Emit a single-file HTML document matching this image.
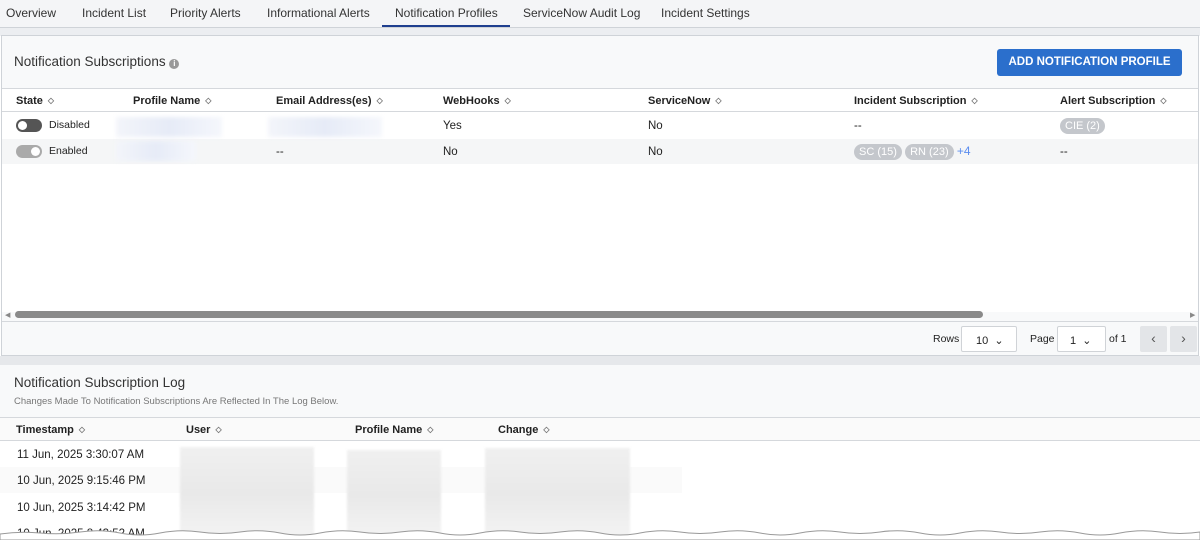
<!DOCTYPE html><html><head><style>
*{box-sizing:border-box;margin:0;padding:0}
body{width:1200px;height:540px;overflow:hidden;background:#fff;font-family:"Liberation Sans",sans-serif;color:#222;font-size:11.5px;position:relative}
.abs{position:absolute}
.tabs{left:0;top:0;width:1200px;height:28px;background:#f4f5f7;border-bottom:1px solid #cfd3d8}
.tab{position:absolute;top:6px;font-size:12px;color:#333}
.sort{display:inline-block;font-size:8px;color:#777;margin-left:5px;vertical-align:1px}
.h{font-weight:bold;font-size:11px}
.pill{display:inline-block;background:#c4c7cc;color:#fff;border-radius:9px;padding:2px 5px;font-size:11px}
.blur{background:linear-gradient(90deg,#f3f5fa,#e6ebf7,#f5f7fc);filter:blur(2px)}
.gblur{background:linear-gradient(180deg,#f0f0f0,#e9e9e9,#f4f4f4);filter:blur(1px)}
</style></head><body>
<div class="abs tabs">
<span class="tab" style="left:6px">Overview</span>
<span class="tab" style="left:82px">Incident List</span>
<span class="tab" style="left:170px">Priority Alerts</span>
<span class="tab" style="left:267px">Informational Alerts</span>
<span class="tab" style="left:395px">Notification Profiles</span>
<span class="tab" style="left:523px">ServiceNow Audit Log</span>
<span class="tab" style="left:661px">Incident Settings</span>
<div class="abs" style="left:382px;top:25px;width:128px;height:2px;background:#1f3f8f"></div>
</div>
<div class="abs" style="left:0;top:28px;width:1200px;height:8px;background:#eceef1"></div>
<div class="abs" style="left:1px;top:35px;width:1198px;height:321px;border:1px solid #cfd3d8;background:#f8f9fa"></div>
<div class="abs" style="left:14px;top:54px;font-size:13.5px;color:#333">Notification Subscriptions <span style="display:inline-block;width:10px;height:10px;border-radius:50%;background:#999;color:#fff;font-size:8px;text-align:center;line-height:10px;font-weight:bold">i</span></div>
<div class="abs" style="left:997px;top:49px;width:185px;height:27px;background:#2b6fcc;border-radius:3px;color:#fff;font-weight:bold;font-size:11.5px;text-align:center;line-height:27px">ADD NOTIFICATION PROFILE</div>
<div class="abs" style="left:2px;top:88px;width:1196px;height:24px;background:#fff;border-top:1px solid #d5d8dc;border-bottom:1px solid #d5d8dc"></div>
<div class="abs h" style="left:16px;top:95px">State<span class="sort">◇</span></div>
<div class="abs h" style="left:133px;top:95px">Profile Name<span class="sort">◇</span></div>
<div class="abs h" style="left:276px;top:95px">Email Address(es)<span class="sort">◇</span></div>
<div class="abs h" style="left:443px;top:95px">WebHooks<span class="sort">◇</span></div>
<div class="abs h" style="left:648px;top:95px">ServiceNow<span class="sort">◇</span></div>
<div class="abs h" style="left:854px;top:95px">Incident Subscription<span class="sort">◇</span></div>
<div class="abs h" style="left:1060px;top:95px">Alert Subscription<span class="sort">◇</span></div>
<div class="abs" style="left:2px;top:112px;width:1196px;height:200px;background:#fff"></div>
<div class="abs" style="left:2px;top:139px;width:1196px;height:25px;background:#f5f6f7"></div>
<div class="abs" style="left:16px;top:119px;width:26px;height:13px;border-radius:7px;background:#555"><div class="abs" style="left:2px;top:2px;width:9px;height:9px;border-radius:50%;background:#fff"></div></div>
<div class="abs" style="left:49px;top:119px;font-size:10.5px">Disabled</div>
<div class="abs" style="left:16px;top:145px;width:26px;height:13px;border-radius:7px;background:#aaa"><div class="abs" style="left:15px;top:2px;width:9px;height:9px;border-radius:50%;background:#fff"></div></div>
<div class="abs" style="left:49px;top:145px;font-size:10.5px">Enabled</div>
<div class="abs blur" style="left:116px;top:117px;width:106px;height:20px"></div>
<div class="abs blur" style="left:116px;top:141px;width:80px;height:20px"></div>
<div class="abs blur" style="left:268px;top:117px;width:114px;height:20px"></div>
<div class="abs" style="left:443px;top:120px">Yes</div>
<div class="abs" style="left:443px;top:146px">No</div>
<div class="abs" style="left:648px;top:120px">No</div>
<div class="abs" style="left:648px;top:146px">No</div>
<div class="abs" style="left:276px;top:146px">--</div>
<div class="abs" style="left:854px;top:120px">--</div>
<div class="abs" style="left:854px;top:144px"><span class="pill">SC (15)</span> <span class="pill">RN (23)</span> <span style="color:#5b8def;font-size:12px">+4</span></div>
<div class="abs" style="left:1060px;top:118px"><span class="pill">CIE (2)</span></div>
<div class="abs" style="left:1060px;top:146px">--</div>
<div class="abs" style="left:15px;top:311px;width:968px;height:7px;border-radius:4px;background:#8a8a8a"></div>
<div class="abs" style="left:5px;top:311px;font-size:7px;color:#888">◀</div>
<div class="abs" style="left:1190px;top:311px;font-size:7px;color:#888">▶</div>
<div class="abs" style="left:2px;top:321px;width:1196px;height:1px;background:#d5d8dc"></div>
<div class="abs" style="left:933px;top:333px;font-size:10.5px">Rows</div>
<div class="abs" style="left:961px;top:326px;width:56px;height:26px;border:1px solid #d0d3d7;background:#fff;border-radius:2px;font-size:11px;padding:7px 0 0 14px">10 &nbsp;⌄</div>
<div class="abs" style="left:1030px;top:333px;font-size:10.5px">Page</div>
<div class="abs" style="left:1057px;top:326px;width:49px;height:26px;border:1px solid #d0d3d7;background:#fff;border-radius:2px;font-size:11px;padding:7px 0 0 12px">1 &nbsp;⌄</div>
<div class="abs" style="left:1109px;top:333px;font-size:10.5px">of 1</div>
<div class="abs" style="left:1140px;top:326px;width:27px;height:26px;background:#e3e5e8;border-radius:2px;text-align:center;line-height:25px;font-size:14px;color:#555">‹</div>
<div class="abs" style="left:1170px;top:326px;width:27px;height:26px;background:#e3e5e8;border-radius:2px;text-align:center;line-height:25px;font-size:14px;color:#555">›</div>
<div class="abs" style="left:0;top:356px;width:1200px;height:9px;background:#e6e8eb"></div>
<div class="abs" style="left:0;top:365px;width:1200px;height:53px;background:#f8f9fa"></div>
<div class="abs" style="left:14px;top:375px;font-size:13.5px;color:#333">Notification Subscription Log</div>
<div class="abs" style="left:14px;top:396px;font-size:9.5px;color:#777">Changes Made To Notification Subscriptions Are Reflected In The Log Below.</div>
<div class="abs" style="left:0;top:417px;width:1200px;height:24px;background:#fafafa;border-top:1px solid #d5d8dc;border-bottom:1px solid #d5d8dc"></div>
<div class="abs h" style="left:16px;top:424px">Timestamp<span class="sort">◇</span></div>
<div class="abs h" style="left:186px;top:424px">User<span class="sort">◇</span></div>
<div class="abs h" style="left:355px;top:424px">Profile Name<span class="sort">◇</span></div>
<div class="abs h" style="left:498px;top:424px">Change<span class="sort">◇</span></div>
<div class="abs" style="left:0;top:467px;width:682px;height:26px;background:#fafafa"></div>
<div class="abs" style="left:17px;top:449px">11 Jun, 2025 3:30:07 AM</div>
<div class="abs" style="left:17px;top:475px">10 Jun, 2025 9:15:46 PM</div>
<div class="abs" style="left:17px;top:502px">10 Jun, 2025 3:14:42 PM</div>
<div class="abs" style="left:17px;top:528px">10 Jun, 2025 8:43:52 AM</div>
<div class="abs gblur" style="left:180px;top:447px;width:134px;height:93px"></div>
<div class="abs gblur" style="left:347px;top:450px;width:94px;height:90px"></div>
<div class="abs gblur" style="left:485px;top:448px;width:145px;height:92px"></div>
<svg class="abs" style="left:0;top:525px" width="1200" height="15"><path d="M0 9 Q20 6 40 8 Q60 10 80 7 Q100 4 120 8 Q140 12 160 8 Q180 4 200 7 Q220 10 240 7 Q260 4 280 8 Q300 12 320 8 Q340 4 360 7 Q380 10 400 7 Q420 4 440 8 Q460 12 480 8 Q500 4 520 7 Q540 10 560 7 Q580 4 600 8 Q620 12 640 8 Q660 4 680 7 Q700 10 720 7 Q740 4 760 8 Q780 12 800 8 Q820 4 840 7 Q860 10 880 7 Q900 4 920 8 Q940 12 960 8 Q980 4 1000 7 Q1020 10 1040 7 Q1060 4 1080 8 Q1100 12 1120 8 Q1140 4 1160 7 Q1180 10 1200 7 L1200 15 L0 15Z" fill="#fff" stroke="#999" stroke-width="1"/></svg>
</body></html>
